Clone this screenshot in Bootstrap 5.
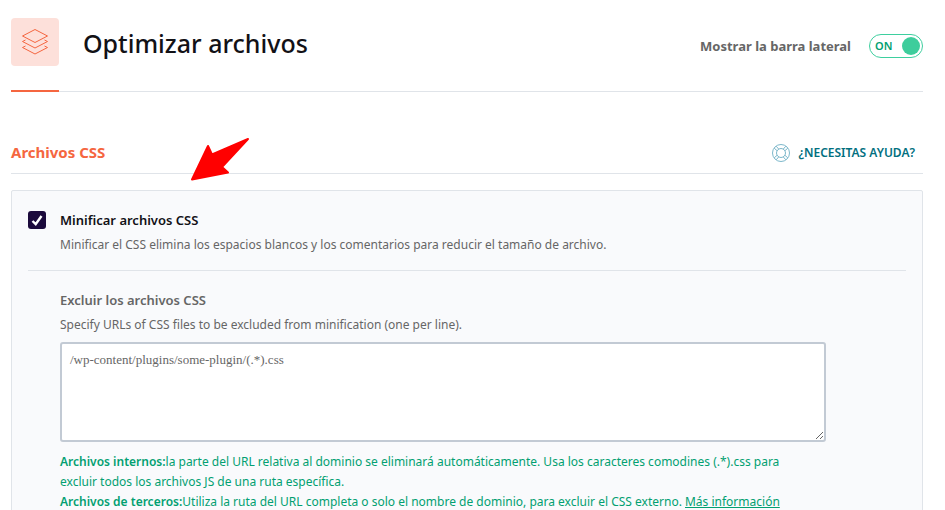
<!DOCTYPE html>
<html lang="es">
<head>
<meta charset="utf-8">
<meta name="viewport" content="width=device-width, initial-scale=1">
<title>Optimizar archivos</title>
<link href="https://cdn.jsdelivr.net/npm/bootstrap@5.3.0/dist/css/bootstrap.min.css" rel="stylesheet">
<style>
  body { font-family: "Noto Sans", "Open Sans", sans-serif; font-size: 12px; line-height: 20px; color: #666; background: #fff; }
  .page { padding: 18px 22px 0 11px; }
  .page-head { border-bottom: 1px solid #e0e4e9; }
  .head-mark { padding-bottom: 24px; margin-bottom: -1px; border-bottom: 2px solid #f56640; }
  .mark-tile { width: 48px; height: 48px; border-radius: 4px; background: #fde0da; }
  .page-title { font-size: 25px; line-height: 32px; font-weight: 500; color: #121116; margin: 9px 0 0 24px; }
  .side-label { font-size: 13px; font-weight: 700; color: #666; }
  .side-switch { margin-top: 16px; gap: 18px; }
  .toggle { width: 54px; height: 24px; border: 1px solid #3ecf9f; border-radius: 12px; padding: 0 2px 0 5px; background: #fff; }
  .toggle-text { font-size: 11px; font-weight: 600; color: #02a071; }
  .toggle-knob { width: 18px; height: 18px; border-radius: 50%; background: #3ecd9c; }
  .section-head { margin-top: 50px; padding: 0 8px 10px 0; border-bottom: 1px solid #e0e4e9; }
  .section-title { font-size: 15px; line-height: 21px; font-weight: 700; color: #f56640; }
  .help { font-size: 12px; font-weight: 600; color: #02707f; gap: 8px; }
  .panel { margin-top: 16px; padding: 19px 16px 24px; border: 1px solid #e0e4e9; border-radius: 2px; background: #f9fafc; }
  .option { gap: 14px; padding-bottom: 15px; border-bottom: 1px solid #e0e4e9; }
  .option .form-check-input { width: 18px; height: 18px; margin: 1px 0 0; border: 0; border-radius: 3px; }
  .option .form-check-input:checked { background-color: #1b0a3c; background-size: 18px 18px;
    background-image: url("data:image/svg+xml,%3Csvg xmlns='http://www.w3.org/2000/svg' viewBox='0 0 18 18'%3E%3Cpath d='M4.500 10l3.200 3.200L13.500 5' fill='none' stroke='%23fff' stroke-width='2.400'/%3E%3C/svg%3E"); }
  .option-name { font-size: 13px; font-weight: 600; color: #121116; margin-bottom: 5px; }
  .exclude { padding: 19px 80px 0 32px; }
  .exclude-name { font-size: 13px; font-weight: 600; margin-bottom: 5px; }
  .exclude .form-control { height: 100px; margin: 7px 0 10px; padding: 7px 8px; border: 2px solid #c2cad4; border-radius: 3px; background: #fff; color: #666; font: 13px/18px "Liberation Serif", serif; }
  .hint { padding-right: 24px; }
  .hint, .hint a { color: #02a071; }
  .hint b { font-weight: 600; }
  .arrow { left: 189px; top: 135px; }
</style>
</head>
<body class="position-relative">
<main class="page">
  <header class="page-head d-flex align-items-start">
    <div class="head-mark">
      <div class="mark-tile d-flex align-items-center justify-content-center">
        <svg width="28" height="28" viewBox="0 0 28 28" fill="none" stroke="#f56640" stroke-width="1" stroke-linejoin="round" aria-hidden="true">
          <path d="M14 1.500L26.500 8L14 14.500L1.500 8Z"/>
          <path d="M4.500 12L1.500 13.500L14 20L26.500 13.500L23.500 12"/>
          <path d="M4.500 18L1.500 19.500L14 26L26.500 19.500L23.500 18"/>
        </svg>
      </div>
    </div>
    <h1 class="page-title">Optimizar archivos</h1>
    <div class="side-switch d-flex align-items-center ms-auto">
      <span class="side-label" id="sideLabel">Mostrar la barra lateral</span>
      <button type="button" class="toggle d-flex align-items-center justify-content-between" role="switch" aria-checked="true" aria-labelledby="sideLabel">
        <span class="toggle-text">ON</span><span class="toggle-knob"></span>
      </button>
    </div>
  </header>

  <div class="section-head d-flex align-items-center justify-content-between">
    <h2 class="section-title mb-0">Archivos CSS</h2>
    <a href="#" class="help d-flex align-items-center text-decoration-none">
      <svg width="18" height="18" viewBox="0 0 18 18" fill="none" stroke="#7db8cb" stroke-width="1" aria-hidden="true">
        <circle cx="9" cy="9" r="8.500"/><circle cx="9" cy="9" r="4.500"/>
        <path d="M2.200 4.200L5.200 6.800M4.200 2.200L6.800 5.200M13.800 2.200L11.200 5.200M15.800 4.200L12.800 6.800M2.200 13.800L5.200 11.200M4.200 15.800L6.800 12.800M15.800 13.800L12.800 11.200M13.800 15.800L11.200 12.800"/>
      </svg>
      <span>¿NECESITAS AYUDA?</span>
    </a>
  </div>

  <section class="panel">
    <div class="option d-flex align-items-start">
      <input class="form-check-input flex-shrink-0" type="checkbox" id="minify" checked>
      <div>
        <label class="option-name d-block" for="minify">Minificar archivos CSS</label>
        <div>Minificar el CSS elimina los espacios blancos y los comentarios para reducir el tamaño de archivo.</div>
      </div>
    </div>
    <div class="exclude">
      <label class="exclude-name d-block" for="excluded">Excluir los archivos CSS</label>
      <div>Specify URLs of CSS files to be excluded from minification (one per line).</div>
      <textarea class="form-control" id="excluded" spellcheck="false">/wp-content/plugins/some-plugin/(.*).css</textarea>
      <div class="hint"><b>Archivos internos:</b>la parte del URL relativa al dominio se eliminará automáticamente. Usa los caracteres comodines (.*).css para excluir todos los archivos JS de una ruta específica.<br><b>Archivos de terceros:</b>Utiliza la ruta del URL completa o solo el nombre de dominio, para excluir el CSS externo. <a href="#">Más información</a></div>
    </div>
  </section>
</main>
<svg class="arrow position-absolute" width="62" height="48" viewBox="0 0 62 48" fill="#f00" stroke="#f00" stroke-width="2" stroke-linejoin="round" aria-hidden="true">
  <path d="M3 44.500L19 11L23 19.500L59 4L33 32L39 37.500Z"/>
</svg>
</body>
</html>
